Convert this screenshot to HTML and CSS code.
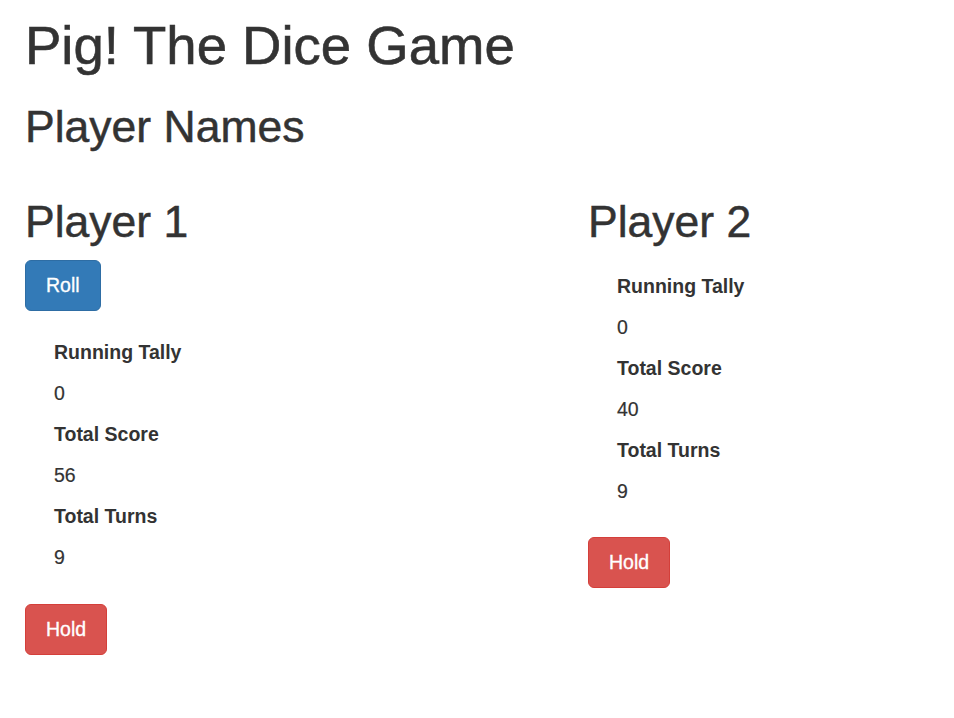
FILE: index.html
```html
<!DOCTYPE html>
<html>
<head>
<meta charset="utf-8">
<title>Pig! The Dice Game</title>
<link rel="stylesheet" href="styles.css">
</head>
<body>
<div class="page">
  <h1 class="title">Pig! The Dice Game</h1>
  <h2 class="heading">Player Names</h2>
  <div class="players">
    <section class="player">
      <h2 class="heading player-name">Player 1</h2>
      <button class="btn btn-primary roll">Roll</button>
      <ul class="stats">
        <li class="label">Running Tally</li>
        <li class="value">0</li>
        <li class="label">Total Score</li>
        <li class="value">56</li>
        <li class="label">Total Turns</li>
        <li class="value">9</li>
      </ul>
      <button class="btn btn-danger">Hold</button>
    </section>
    <section class="player">
      <h2 class="heading player-name">Player 2</h2>
      <ul class="stats">
        <li class="label">Running Tally</li>
        <li class="value">0</li>
        <li class="label">Total Score</li>
        <li class="value">40</li>
        <li class="label">Total Turns</li>
        <li class="value">9</li>
      </ul>
      <button class="btn btn-danger">Hold</button>
    </section>
  </div>
</div>
</body>
</html>
```

FILE: styles.css
```css
* { box-sizing: border-box; }

html, body {
  margin: 0;
  padding: 0;
  background: #fff;
}

body {
  font-family: "Liberation Sans", Arial, Helvetica, sans-serif;
  color: #333;
  font-size: 19.5px;
}

.page {
  padding: 16px 25px 40px;
}

.title {
  margin: 0;
  font-size: 54.5px;
  line-height: 59px;
  font-weight: 500;
  -webkit-text-stroke: 0.6px #333;
}

.heading {
  margin: 28px 0 0;
  font-size: 44.5px;
  line-height: 48px;
  font-weight: 500;
  -webkit-text-stroke: 0.5px #333;
}

.players {
  display: grid;
  grid-template-columns: 563px 1fr;
  margin-top: 47px;
}

.player {
  display: flex;
  flex-direction: column;
  align-items: flex-start;
}

.player-name {
  margin: 0;
}

.btn {
  font-family: "Liberation Sans", Arial, Helvetica, sans-serif;
  font-size: 19.5px;
  line-height: 27px;
  padding: 11px 20px;
  border: 1px solid transparent;
  border-radius: 6px;
  color: #fff;
  cursor: pointer;
  -webkit-text-stroke: 0.3px #fff;
}

.btn-primary {
  background: #337ab7;
  border-color: #2e6da4;
}

.btn-danger {
  background: #d9534f;
  border-color: #d43f3a;
}

.roll {
  margin-top: 14px;
}

.stats {
  list-style: none;
  margin: 26px 0 19px;
  padding: 0 0 0 29px;
}

.roll + .stats {
  margin-top: 27px;
  margin-bottom: 20px;
}

.stats li {
  line-height: 28px;
  margin-bottom: 13px;
}

.stats .value {
  -webkit-text-stroke: 0.2px #333;
}

.stats .label {
  font-weight: bold;
}
```
